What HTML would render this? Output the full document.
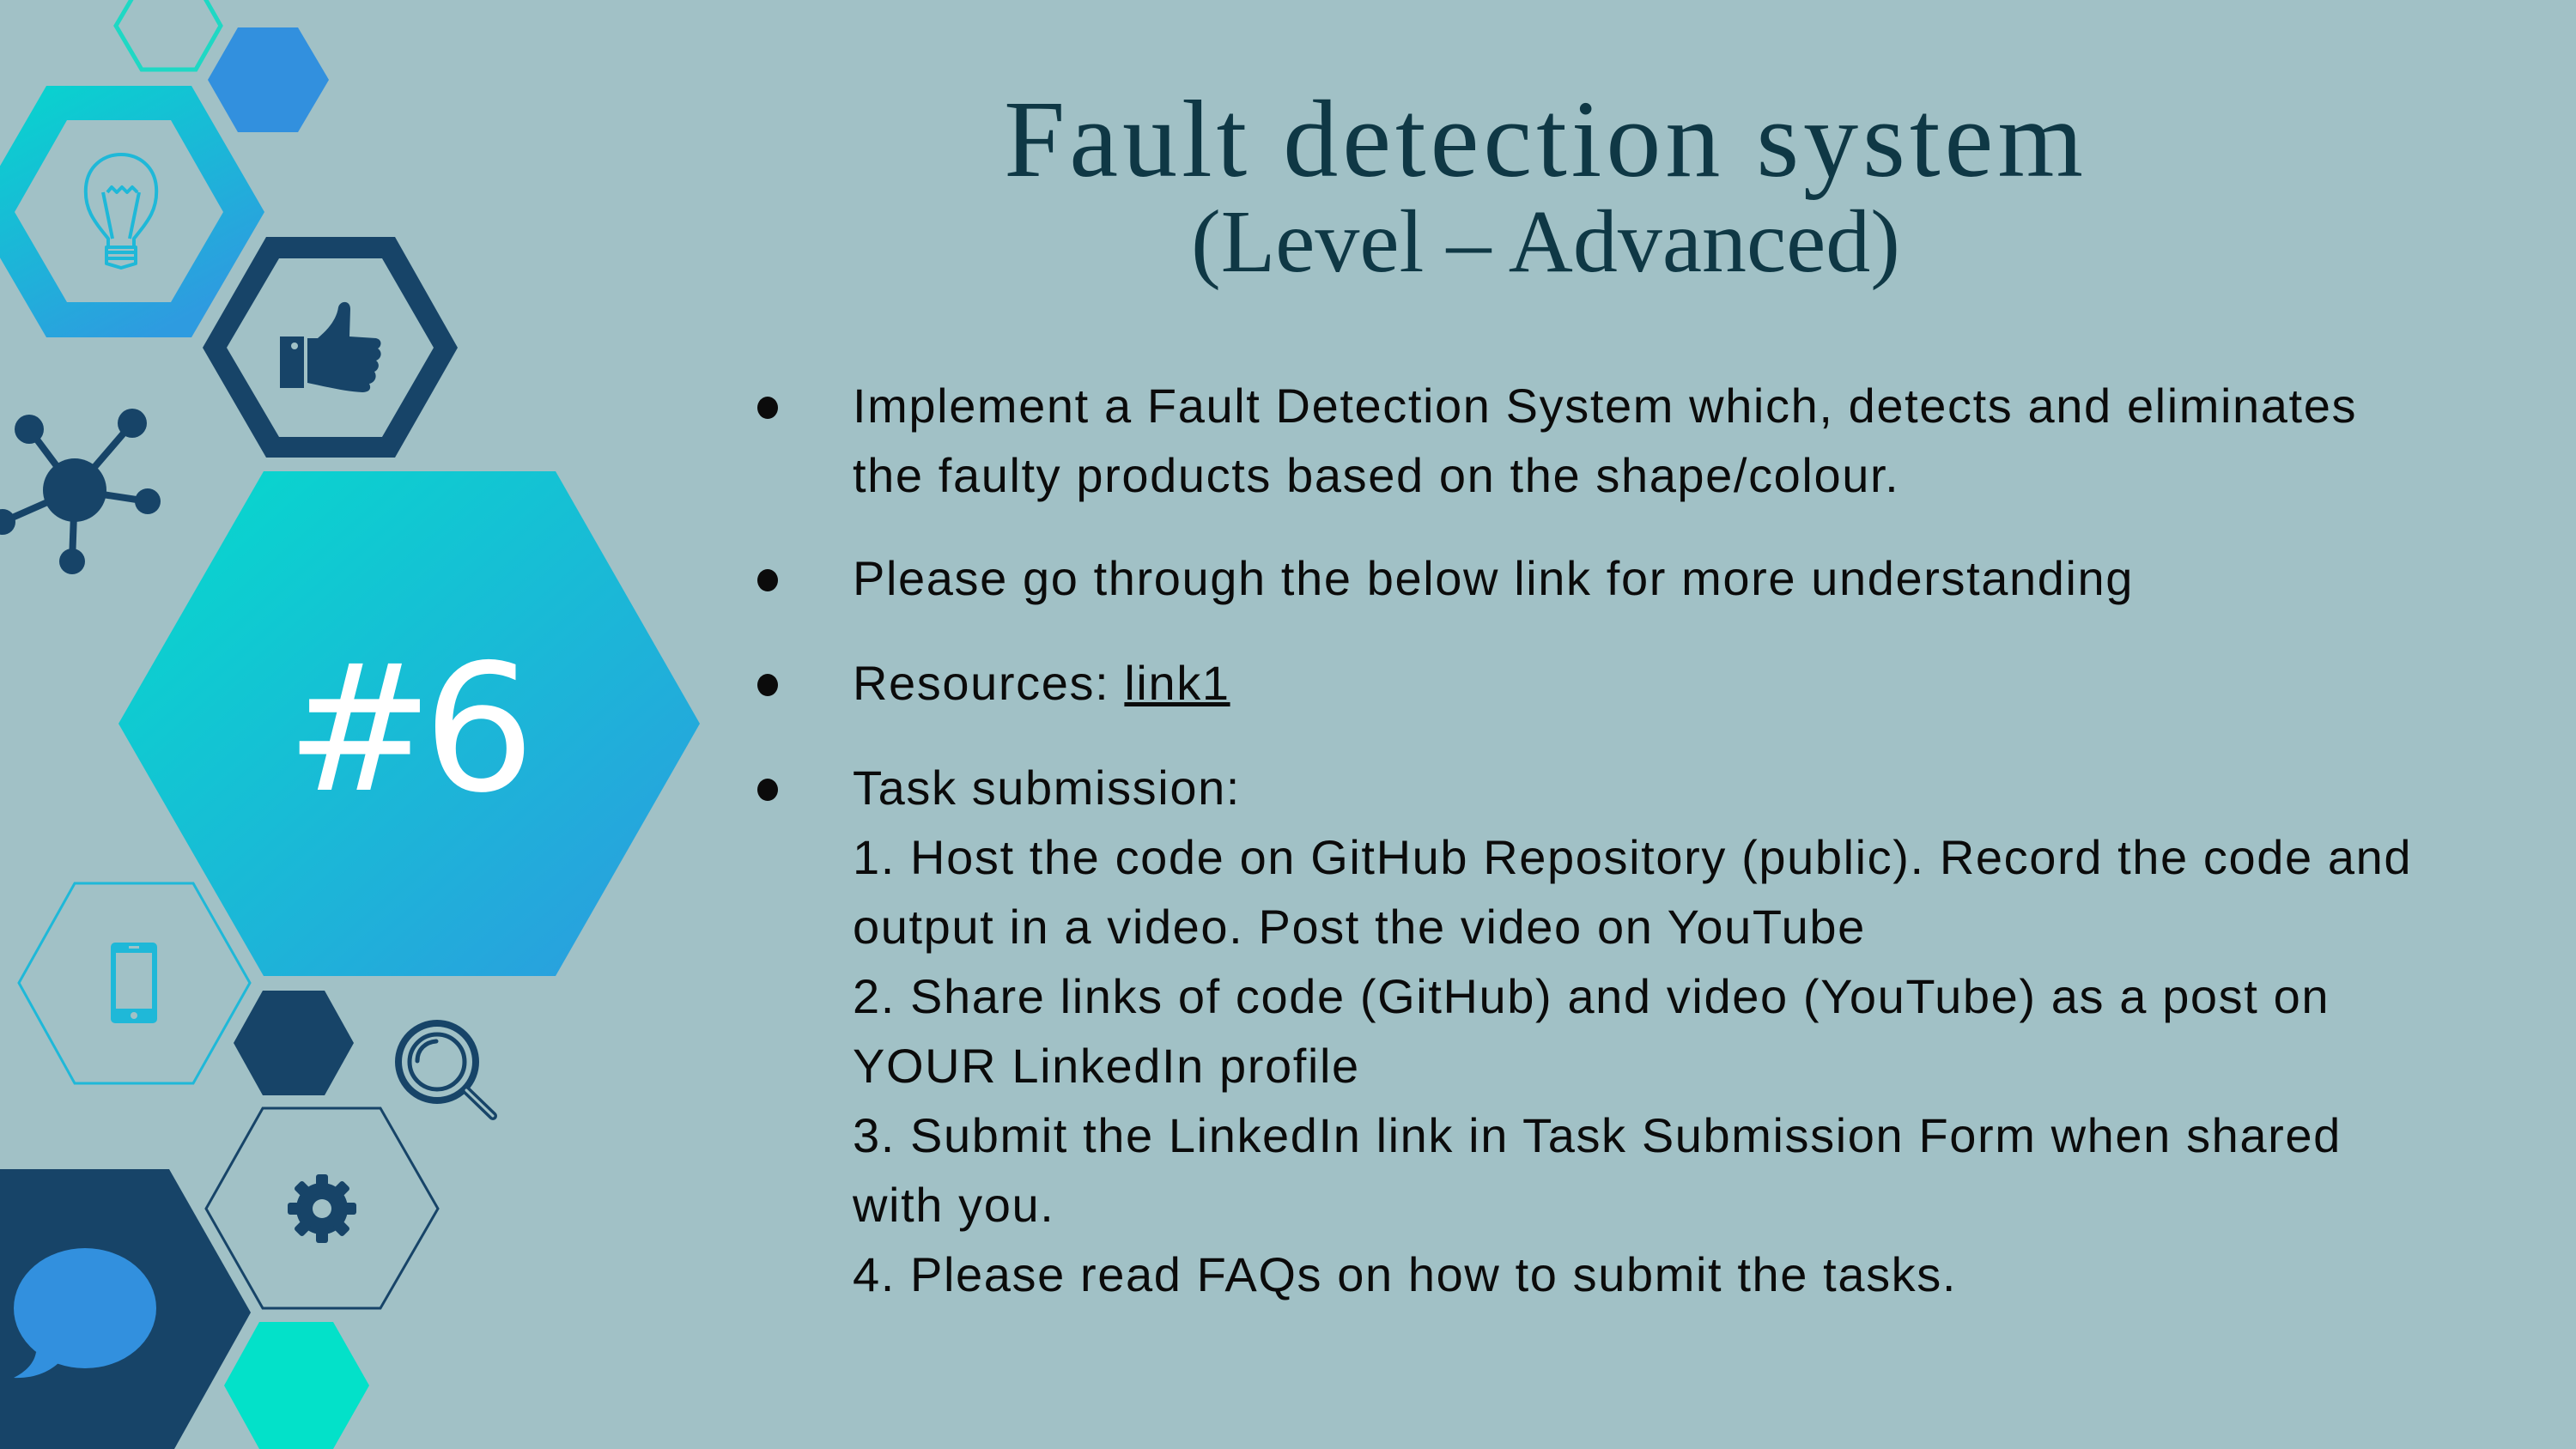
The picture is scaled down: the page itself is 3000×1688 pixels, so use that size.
<!DOCTYPE html>
<html><head><meta charset="utf-8"><style>
html,body{margin:0;padding:0}
body{width:3000px;height:1688px;background:#a1c1c6;position:relative;overflow:hidden;font-family:"Liberation Sans",sans-serif}
svg{position:absolute;left:0;top:0}
.t{position:absolute;white-space:nowrap;color:#0f3845;font-family:"Liberation Serif",serif;line-height:1}
.l{position:absolute;white-space:nowrap;font-size:56px;color:#0b0b0b;left:993px;line-height:1;letter-spacing:1.6px}
.b{position:absolute;left:882px;width:24px;height:26px;border-radius:50%;background:#0b0b0b}
</style></head><body>
<svg width="3000" height="1688" viewBox="0 0 3000 1688">
<defs>
<linearGradient id="g1" x1="0" y1="0" x2="1" y2="1"><stop offset="0" stop-color="#05dbcc"/><stop offset="1" stop-color="#2d9ae0"/></linearGradient>
<linearGradient id="g2" x1="0" y1="0" x2="0.6" y2="1"><stop offset="0" stop-color="#05d8cd"/><stop offset="1" stop-color="#2e9be0"/></linearGradient>
</defs>
<polygon points="165,-21 228,-21 257,30 228,81 165,81 135,30" fill="none" stroke="#1fd8c4" stroke-width="5"/>
<polygon points="277,32 347,32 383,93 347,154 277,154 242,93" fill="#3290de"/>
<path fill-rule="evenodd" fill="url(#g2)" d="M54,100 L223,100 L308,247 L223,393 L54,393 L-31,247 Z M78,140 L17,247 L78,352 L199,352 L260,247 L199,140 Z"/>
<g fill="none" stroke="#1fb8d8" stroke-width="4" stroke-linejoin="round">
<path d="M126,278 C110,258 98,244 100,218 C102,194 120,180 141,180 C162,180 180,194 182,218 C184,244 172,258 156,278 L156,288 L126,288 Z"/>
<path d="M120,224 L131,278 M162,224 L151,278 M125,224 L130,218 L136,224 L142,218 L148,224 L154,218 L160,224"/>
<path d="M124,288 L158,288 L158,307 L141,312 L124,307 Z M124,294 L158,294 M124,301 L158,301"/>
</g>
<path fill-rule="evenodd" fill="#174468" d="M310,276 L460,276 L533,405 L460,533 L310,533 L236,405 Z M325,301 L264,405 L325,509 L445,509 L505,405 L445,301 Z"/>
<rect x="326" y="392" width="28" height="60" fill="#174468"/><circle cx="343" cy="403" r="4" fill="#a1c1c6"/>
<path fill="#174468" d="M358,394 L370,394 C382,384 392,372 394,358 C396,350 408,349 408,360 L407,392 L438,394 C446,396 444,404 440,406 C446,410 444,418 438,420 C443,424 441,431 436,433 C440,439 436,446 430,447 C433,453 430,457 422,457 C400,456 378,450 358,446 Z"/>
<g stroke="#174468" stroke-width="8" fill="#174468">
<line x1="87" y1="571" x2="34" y2="500"/><line x1="87" y1="571" x2="154" y2="493"/><line x1="87" y1="571" x2="172" y2="584"/><line x1="87" y1="571" x2="3" y2="608"/><line x1="87" y1="571" x2="84" y2="654"/>
<circle cx="87" cy="571" r="37" stroke="none"/><circle cx="34" cy="500" r="17" stroke="none"/><circle cx="154" cy="493" r="17" stroke="none"/><circle cx="172" cy="584" r="15" stroke="none"/><circle cx="3" cy="608" r="15" stroke="none"/><circle cx="84" cy="654" r="15" stroke="none"/>
</g>
<polygon points="307,549 647,549 815,843 647,1137 307,1137 138,843" fill="url(#g1)"/>
<polygon points="87,1029 225,1029 291,1145 225,1262 87,1262 22,1145" fill="none" stroke="#1fb8d8" stroke-width="3"/>
<rect x="129" y="1098" width="54" height="94" rx="5" fill="#1fb8d8"/>
<rect x="135" y="1110" width="42" height="65" fill="#a1c1c6"/>
<circle cx="156" cy="1183" r="4" fill="#a1c1c6"/>
<rect x="150" y="1102" width="12" height="3" fill="#a1c1c6"/>
<polygon points="306,1154 378,1154 412,1215 378,1276 306,1276 272,1215" fill="#174468"/>
<g fill="none" stroke="#174468">
<circle cx="509" cy="1237" r="45" stroke-width="8"/><circle cx="509" cy="1237" r="32" stroke-width="5"/>
<path d="M486,1236 C486,1222 496,1214 508,1213" stroke-width="5" stroke-linecap="round"/>
<line x1="543" y1="1270" x2="574" y2="1300" stroke-width="10" stroke-linecap="round"/>
</g>
<line x1="543" y1="1270" x2="574" y2="1300" stroke="#a1c1c6" stroke-width="3" stroke-linecap="round"/>
<polygon points="306,1291 443,1291 510,1408 443,1524 306,1524 240,1408" fill="none" stroke="#174468" stroke-width="3"/>
<g transform="translate(375,1408)" fill="#174468">
<circle r="30"/>
<g id="tt"><rect x="-7" y="-40" width="14" height="16" rx="3"/></g>
<use href="#tt" transform="rotate(45)"/><use href="#tt" transform="rotate(90)"/><use href="#tt" transform="rotate(135)"/><use href="#tt" transform="rotate(180)"/><use href="#tt" transform="rotate(225)"/><use href="#tt" transform="rotate(270)"/><use href="#tt" transform="rotate(315)"/>
<circle r="11" fill="#a1c1c6"/>
</g>
<polygon points="-100,1362 197,1362 292,1529 203,1688 -100,1688" fill="#174468"/>
<ellipse cx="99" cy="1524" rx="83" ry="70" fill="#3290de"/>
<path d="M42,1575 C40,1588 30,1598 16,1605 C40,1606 58,1598 70,1586 Z" fill="#3290de"/>
<polygon points="302,1540 388,1540 430,1614 388,1688 302,1688 261,1614" fill="#03e1c9"/>
</svg>
<div style="position:absolute;left:322px;top:748px;width:300px;text-align:center;color:#fff;font-size:205px;line-height:1;font-family:'DejaVu Sans',sans-serif;letter-spacing:-12px">#6</div>
<div class="t" style="top:98px;font-size:128px;left:1800px;transform:translateX(-50%);letter-spacing:5px">Fault detection system</div>
<div class="t" style="top:230px;font-size:104px;left:1800px;transform:translateX(-50%)">(Level – Advanced)</div>
<div class="b" style="top:462px"></div>
<div class="l" style="top:445px">Implement a Fault Detection System which, detects and eliminates</div>
<div class="l" style="top:526px">the faulty products based on the shape/colour.</div>
<div class="b" style="top:663px"></div>
<div class="l" style="top:646px">Please go through the below link for more understanding</div>
<div class="b" style="top:785px"></div>
<div class="l" style="top:768px">Resources: <span style="text-decoration:underline">link1</span></div>
<div class="b" style="top:907px"></div>
<div class="l" style="top:890px">Task submission:</div>
<div class="l" style="top:971px">1. Host the code on GitHub Repository (public). Record the code and</div>
<div class="l" style="top:1052px">output in a video. Post the video on YouTube</div>
<div class="l" style="top:1133px">2. Share links of code (GitHub) and video (YouTube) as a post on</div>
<div class="l" style="top:1214px">YOUR LinkedIn profile</div>
<div class="l" style="top:1295px">3. Submit the LinkedIn link in Task Submission Form when shared</div>
<div class="l" style="top:1376px">with you.</div>
<div class="l" style="top:1457px">4. Please read FAQs on how to submit the tasks.</div>
</body></html>
